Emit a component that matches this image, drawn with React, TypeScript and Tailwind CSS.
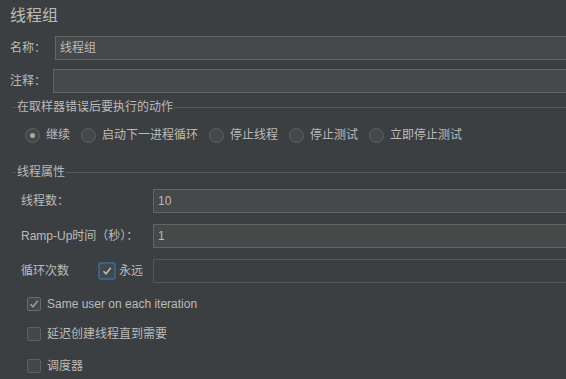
import React from "react";

const font = "font-['Liberation_Sans','Noto_Sans_CJK_SC',sans-serif]";

function Field({ value, disabled }: { value?: string; disabled?: boolean }) {
  return (
    <div
      className={
        "-mr-[6px] flex h-[24px] flex-1 items-center border pl-[4px] " +
        (disabled ? "border-[#55585a] bg-[#3c3f41]" : "border-[#646464] bg-[#45494a]")
      }
    >
      {value}
    </div>
  );
}

function SectionTitle({ text }: { text: string }) {
  return (
    <div className="flex h-[14px] items-center">
      <div className="ml-[12px] h-px w-[4px] bg-[#55585a]" />
      <span className="px-[1px] leading-[14px]">{text}</span>
      <div className="h-px flex-1 bg-[#55585a]" />
    </div>
  );
}

function Radio({ label, checked }: { label: string; checked?: boolean }) {
  return (
    <div className="flex items-center">
      <span className="flex h-[15px] w-[15px] items-center justify-center rounded-full border border-[#5e6060] bg-[#43494a]">
        {checked ? <span className="h-[5px] w-[5px] rounded-full bg-[#a9a9a9]" /> : null}
      </span>
      <span className="ml-[6px]">{label}</span>
    </div>
  );
}

function CheckMark({ color }: { color: string }) {
  return (
    <svg width="12" height="12" viewBox="0 0 12 12">
      <path d="M2.5 6.2 L5 8.8 L9.8 2.8" fill="none" stroke={color} strokeWidth="1.6" />
    </svg>
  );
}

function Check({ label, checked }: { label: string; checked?: boolean }) {
  return (
    <div className="flex h-[20px] items-center pl-[27px]">
      <span
        className={
          "flex h-[14px] w-[14px] items-center justify-center rounded-[2px] border bg-[#43494a] " +
          (checked ? "border-[#6b6b6b]" : "border-[#5e6060]")
        }
      >
        {checked ? <CheckMark color="#9a9a9a" /> : null}
      </span>
      <span className="ml-[6px]">{label}</span>
    </div>
  );
}

export default function App() {
  return (
    <div
      className={`h-[379px] w-[566px] overflow-hidden bg-[#3c3f41] text-[12px] text-[#bbbbbb] ${font}`}
    >
      <div className="pl-[10px] pt-[6px] text-[16px] leading-[20px]">线程组</div>

      <div className="mt-[10px] flex items-center pl-[10px]">
        <span className="w-[45px]">名称：</span>
        <Field value="线程组" />
      </div>
      <div className="mt-[9px] flex items-center pl-[10px]">
        <span className="w-[43px]">注释：</span>
        <Field />
      </div>

      <div className="mt-[7px]">
        <SectionTitle text="在取样器错误后要执行的动作" />
      </div>
      <div className="mt-[11px] flex h-[20px] items-center gap-[11px] pl-[25px]">
        <Radio label="继续" checked />
        <Radio label="启动下一进程循环" />
        <Radio label="停止线程" />
        <Radio label="停止测试" />
        <Radio label="立即停止测试" />
      </div>

      <div className="mt-[20px]">
        <SectionTitle text="线程属性" />
      </div>
      <div className="mt-[10px] flex items-center pl-[21px]">
        <span className="w-[132px]">线程数：</span>
        <Field value="10" />
      </div>
      <div className="mt-[11px] flex items-center pl-[21px]">
        <span className="w-[132px]">Ramp-Up时间（秒）：</span>
        <Field value="1" />
      </div>
      <div className="mt-[11px] flex items-center pl-[21px]">
        <span className="w-[77px]">循环次数</span>
        <span className="flex h-[18px] w-[18px] items-center justify-center rounded-[3px] border-2 border-[#3d6185] bg-[#43494a]">
          <CheckMark color="#bbbbbb" />
        </span>
        <span className="ml-[3px] w-[34px]">永远</span>
        <Field disabled />
      </div>

      <div className="mt-[11px]">
        <Check label="Same user on each iteration" checked />
      </div>
      <div className="mt-[10px]">
        <Check label="延迟创建线程直到需要" />
      </div>
      <div className="mt-[12px]">
        <Check label="调度器" />
      </div>
    </div>
  );
}
